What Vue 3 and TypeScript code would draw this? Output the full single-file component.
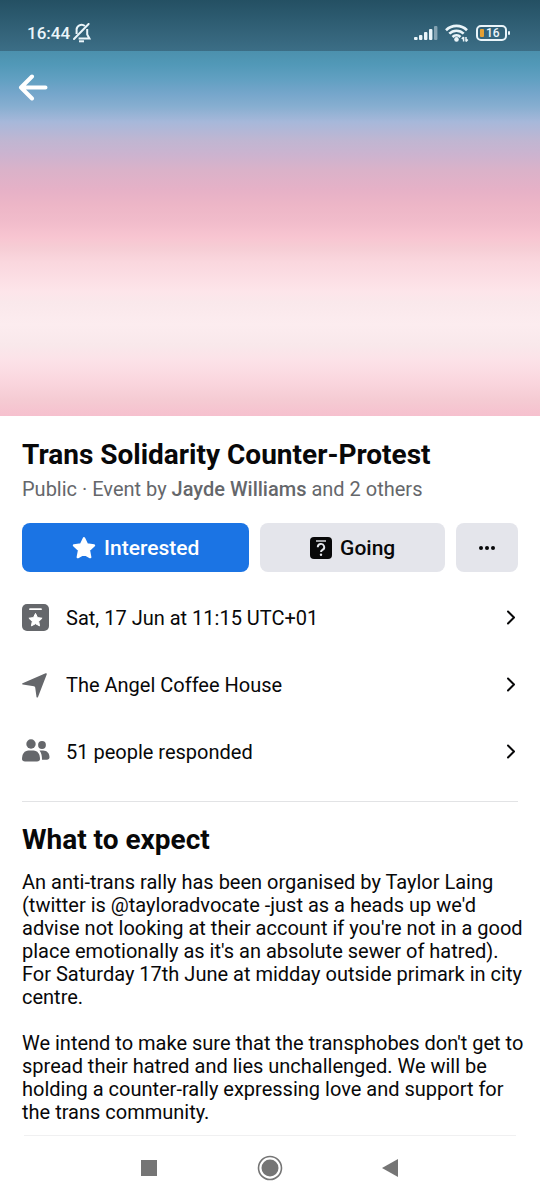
<script setup lang="ts">
interface Detail {
  id: string
  icon: 'date' | 'place' | 'people'
  label: string
}

const details: Detail[] = [
  { id: 'date', icon: 'date', label: 'Sat, 17 Jun at 11:15 UTC+01' },
  { id: 'place', icon: 'place', label: 'The Angel Coffee House' },
  { id: 'people', icon: 'people', label: '51 people responded' },
]

const paragraphs: string[] = [
  "An anti-trans rally has been organised by Taylor Laing (twitter is @tayloradvocate -just as a heads up we'd advise not looking at their account if you're not in a good place emotionally as it's an absolute sewer of hatred).\nFor Saturday 17th June at midday outside primark in city centre.",
  "We intend to make sure that the transphobes don't get to spread their hatred and lies unchallenged. We will be holding a counter-rally expressing love and support for the trans community.",
]
</script>

<template>
  <div class="screen">
    <header class="cover">
      <div class="status">
        <div class="status-left">
          <span class="time">16:44</span>
          <svg class="bell" width="18" height="20" viewBox="0 0 18 20" fill="none" stroke="currentColor" stroke-width="2" aria-hidden="true">
            <path d="M3.600 11V7.200a5 5 0 0 1 8.300-4.200M14.200 6v5.400l2.200 4H5.600" />
            <path d="M1 16 15.600 1" stroke-linecap="round" />
            <path d="M6 18.300h5" />
          </svg>
        </div>
        <div class="status-right">
          <svg width="24" height="16" viewBox="0 0 24 16" fill="currentColor" aria-hidden="true">
            <rect x="0" y="12" width="3.600" height="3" rx="1" />
            <rect x="5" y="10" width="3.400" height="5" rx="1" />
            <rect x="10" y="7" width="3.400" height="8" rx="1" />
            <rect x="15" y="4" width="3.400" height="11" rx="1" />
            <rect x="20" y="1" width="3.400" height="14" rx="1" opacity=".45" />
          </svg>
          <svg width="24" height="18" viewBox="0 0 24 18" fill="none" stroke="currentColor" stroke-width="2.600" aria-hidden="true">
            <path d="M1 6.200a15 15 0 0 1 21 0M4.300 9.700a10.200 10.200 0 0 1 14.400 0M7.500 13a5.800 5.800 0 0 1 8 0" />
            <circle cx="11.500" cy="15.400" r="2.300" fill="currentColor" stroke="none" />
            <path d="M18.600 13v4.500m-1.800-2.500L18.600 13M21 17.500V13m0 4.500 1.800-2" stroke-width="1.500" />
          </svg>
          <div class="battery"><i class="charge"></i><span>16</span></div>
        </div>
      </div>
      <button class="back" type="button" aria-label="Back">
        <svg width="32" height="28" viewBox="0 0 32 28" fill="none" stroke="currentColor" stroke-width="4" stroke-linecap="round" stroke-linejoin="round" aria-hidden="true">
          <path d="M15 3.500 4 14.500l11 11M5 14.500h23.500" />
        </svg>
      </button>
    </header>

    <main class="content">
      <h1>Trans Solidarity Counter-Protest</h1>
      <p class="host">Public · Event by <strong>Jayde Williams</strong> and 2 others</p>

      <div class="actions">
        <button class="action interested" type="button">
          <svg width="24" height="24" viewBox="0 0 24 24" fill="currentColor" stroke="currentColor" stroke-width="2.400" stroke-linejoin="round" aria-hidden="true">
            <path d="m12 2.300 3 6.200 7 .9-5.100 4.700 1.300 7-6.200-3.400-6.200 3.400 1.300-7L2 9.400l7-.9z" />
          </svg>
          <span>Interested</span>
        </button>
        <button class="action going" type="button">
          <svg width="22" height="22" viewBox="0 0 22 22" fill="none" aria-hidden="true">
            <rect width="22" height="22" rx="4" fill="#080809" />
            <path d="M6 4h10" stroke="#e4e6eb" stroke-width="1.400" />
            <path d="M7.800 10.300a3.200 3.200 0 1 1 4.700 2.600c-1 .6-1.500 1-1.500 2.200" stroke="#e4e6eb" stroke-width="1.900" />
            <circle cx="11" cy="17.700" r="1.200" fill="#e4e6eb" />
          </svg>
          <span>Going</span>
        </button>
        <button class="action more" type="button" aria-label="More options">
          <svg width="16" height="4" viewBox="0 0 16 4" fill="currentColor" aria-hidden="true">
            <circle cx="2" cy="2" r="2" /><circle cx="8" cy="2" r="2" /><circle cx="14" cy="2" r="2" />
          </svg>
        </button>
      </div>

      <ul class="details">
        <li v-for="item in details" :key="item.id">
          <button class="detail" type="button">
            <svg v-if="item.icon === 'date'" width="28" height="28" viewBox="0 0 28 28" aria-hidden="true">
              <rect x="0" y="0" width="27" height="27" rx="5" fill="#65676b" />
              <path d="M8 5.200h11" stroke="#fff" stroke-width="1.800" stroke-linecap="round" />
              <path d="m13.500 9.400 2 4.200 4.600.6-3.400 3.200.9 4.500-4.100-2.200-4.100 2.200.9-4.500-3.400-3.200 4.600-.6z" fill="#fff" stroke="#fff" stroke-width="1" stroke-linejoin="round" />
            </svg>
            <svg v-else-if="item.icon === 'place'" width="28" height="28" viewBox="0 0 28 28" aria-hidden="true">
              <path d="M.6 12.200 23.600 2.300c.9-.4 1.500.2 1.100 1.100L16 26c-.3.800-1.300.7-1.500-.1l-1.300-9.500c-.1-.7-.5-1-1.200-1.200L.7 13.500c-.8-.2-.8-1-.1-1.300z" fill="#65676b" />
            </svg>
            <svg v-else width="28" height="28" viewBox="0 0 28 28" fill="#65676b" aria-hidden="true">
              <circle cx="9" cy="6" r="4.700" />
              <circle cx="20" cy="7" r="3.900" />
              <path d="M6.500 12.500h5C15.500 12.500 18 16 18 21c0 1.600-1.200 2.500-3 2.500H3c-1.800 0-3-.9-3-2.500 0-5 2.500-8.500 6.500-8.500z" />
              <path d="M17.500 12.500h3.500c4 0 6.500 2.800 6.500 6.700 0 1.600-1 2.500-2.600 2.500H20c0-3.500-.5-6.500-2.500-9.200z" />
            </svg>
            <span class="label">{{ item.label }}</span>
            <svg width="10" height="16" viewBox="0 0 10 16" fill="none" stroke="#080809" stroke-width="2" stroke-linecap="round" stroke-linejoin="round" aria-hidden="true">
              <path d="m2 1.500 6 6-6 6" />
            </svg>
          </button>
        </li>
      </ul>

      <section class="about">
        <h2>What to expect</h2>
        <p v-for="(text, i) in paragraphs" :key="i">{{ text }}</p>
      </section>
    </main>

    <nav class="system" aria-label="System">
      <button type="button" aria-label="Recent apps">
        <svg width="26" height="26" viewBox="0 0 26 26" aria-hidden="true"><rect x="5" y="5" width="16" height="16" fill="#757575" /></svg>
      </button>
      <button type="button" aria-label="Home">
        <svg width="26" height="26" viewBox="0 0 26 26" aria-hidden="true">
          <circle cx="13" cy="13" r="11.500" fill="none" stroke="#757575" stroke-width="1.600" />
          <circle cx="13" cy="13" r="8.500" fill="#757575" />
        </svg>
      </button>
      <button type="button" aria-label="Back">
        <svg width="26" height="26" viewBox="0 0 26 26" aria-hidden="true"><path d="M4 13 20 4v18z" fill="#757575" /></svg>
      </button>
    </nav>
  </div>
</template>

<style>
body {
  margin: 0;
  background: #fff;
}
</style>

<style scoped>
.screen {
  display: flex;
  flex-direction: column;
  min-height: 100vh;
  font-family: Roboto, "Liberation Sans", sans-serif;
  color: #080809;
  background: #fff;
}

button {
  margin: 0;
  padding: 0;
  border: 0;
  background: none;
  color: inherit;
  font: inherit;
  cursor: pointer;
}

svg {
  display: block;
  flex: none;
}

h1,
h2,
p,
ul {
  margin: 0;
  padding: 0;
}

.cover {
  min-height: 416px;
  color: #fff;
  background: linear-gradient(
    #458aa8 0,
    #4c91ae 52px,
    #5299b8 65px,
    #62a0c2 80px,
    #76a6cb 94px,
    #86aed0 106px,
    #a7b8da 122px,
    #bfb6d2 140px,
    #ccb3cf 155px,
    #dab2c9 170px,
    #e6b1c7 190px,
    #edb6c7 205px,
    #f1bccb 222px,
    #f8c5d1 237px,
    #f6cdd5 248px,
    #fad7de 262px,
    #fcdfe5 280px,
    #fde5ea 292px,
    #fae8eb 302px,
    #fcecef 325px,
    #f9e8eb 345px,
    #fce2e8 360px,
    #fad6de 382px,
    #f5cbd3 400px,
    #f6c0ce 416px
  );
}

.status {
  box-sizing: border-box;
  display: flex;
  align-items: center;
  justify-content: space-between;
  height: 51px;
  padding: 15px 33px 0 27px;
  color: #eaf5fa;
  background: linear-gradient(#245063, #3c6e86);
}

.status-left,
.status-right {
  display: flex;
  align-items: center;
}

.status-left {
  gap: 3px;
}

.status-right {
  gap: 7px;
}

.time {
  font-size: 17px;
  line-height: 20px;
  font-weight: 500;
}

.battery {
  position: relative;
  box-sizing: border-box;
  display: flex;
  align-items: center;
  gap: 2px;
  width: 31px;
  height: 16px;
  padding: 0 2px;
  border: 2px solid currentColor;
  border-radius: 5px;
  font-size: 12px;
  line-height: 12px;
  font-weight: 500;
}

.battery::after {
  content: "";
  position: absolute;
  top: 4px;
  right: -5px;
  width: 2px;
  height: 4px;
  border-radius: 1px;
  background: currentColor;
}

.charge {
  width: 4px;
  height: 8px;
  border-radius: 1px;
  background: #e5a033;
}

.back {
  display: block;
  margin: 22px 0 0 17px;
}

.content {
  flex: 1;
  padding: 21px 22px 0;
}

h1,
h2 {
  font-size: 28px;
  line-height: 36px;
  font-weight: 700;
}

.host {
  font-size: 20px;
  line-height: 32px;
  color: #65676b;
}

.host strong {
  font-weight: 500;
}

.actions {
  display: flex;
  gap: 11px;
  margin-top: 18px;
}

.action {
  display: flex;
  align-items: center;
  justify-content: center;
  gap: 8px;
  height: 49px;
  border-radius: 8px;
  background: #e4e5eb;
  font-size: 21px;
  font-weight: 500;
}

.interested {
  flex: 227 1 0;
  color: #fff;
  background: #1b74e4;
}

.going {
  flex: 184 1 0;
}

.more {
  flex: 62 1 0;
}

.details {
  padding: 12px 0 16px;
  border-bottom: 1px solid #e2e3e5;
  list-style: none;
}

.detail {
  display: flex;
  align-items: center;
  gap: 16px;
  width: 100%;
  height: 67px;
  padding-right: 2px;
  font-size: 20px;
  text-align: left;
}

.label {
  flex: 1;
}

.about {
  margin-right: -10px;
  padding: 20px 0 11px;
}

h2 {
  margin-bottom: 13px;
}

.about p {
  font-size: 20px;
  line-height: 23px;
  white-space: pre-line;
}

.about p + p {
  margin-top: 23px;
}

.system {
  display: grid;
  grid-template-columns: repeat(3, 1fr);
  margin: 0 24px;
  padding: 0 12%;
  height: 64px;
  border-top: 1px solid #f0f0f1;
}

.system button {
  display: flex;
  align-items: center;
  justify-content: center;
}
</style>
